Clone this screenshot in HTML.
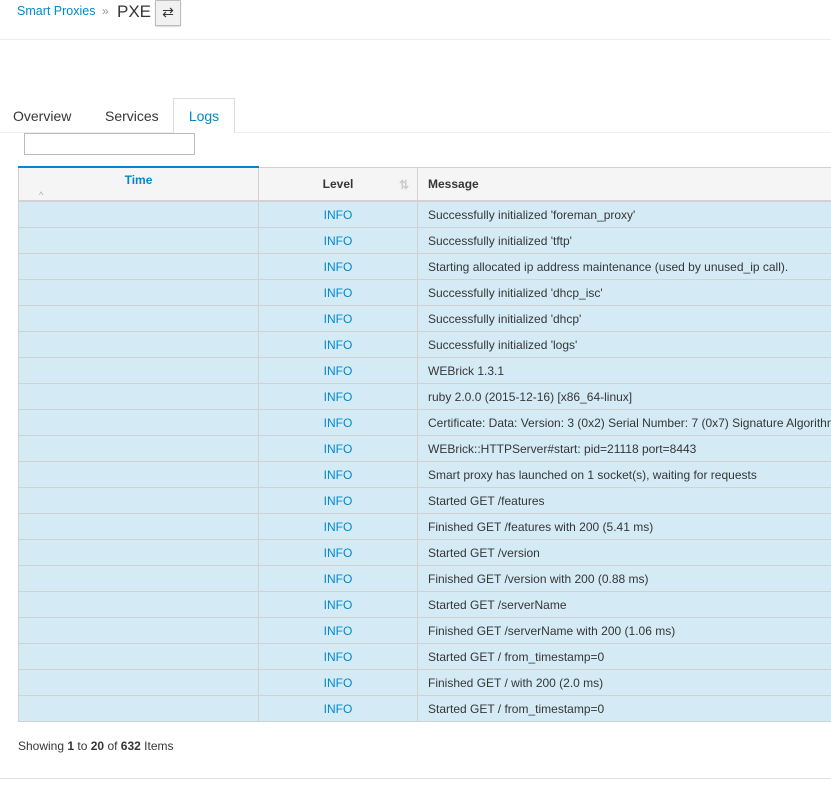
<!DOCTYPE html>
<html><head><style>
body{margin:0;width:831px;height:792px;overflow:hidden;background:#fff;font-family:"Liberation Sans",sans-serif;color:#363636;position:relative;font-size:12px}
.a{position:absolute}
.bc{left:17px;top:4px;font-size:12.5px;color:#0088ce}
.sep{left:102px;top:4px;color:#999;font-size:12px}
.pxe{left:117px;top:2px;font-size:17px;color:#363636}
.btn{left:155px;top:0;width:26px;height:26px;border:1px solid #bbb;background:#f1f1f1;box-sizing:border-box;border-radius:1px;font-size:14px;text-align:center;line-height:23px;box-shadow:0 1px 1px rgba(0,0,0,.15)}
.hr1{left:0;top:39px;width:831px;height:1px;background:#ededed}
.tabline{left:0;top:132px;width:831px;height:1px;background:#ededed}
.tab{top:108px;font-size:14px;color:#363636}
.logs{left:173px;top:98px;width:62px;height:35px;border:1px solid #ddd;border-bottom:none;background:#fff;box-sizing:border-box;color:#0088ce;font-size:14px;text-align:center;padding-top:9px}
.inp{left:24px;top:133px;width:171px;height:22px;border:1px solid #bbb;box-sizing:border-box}
table{position:absolute;left:18px;top:166px;border-collapse:collapse;width:830px;font-size:12px}
th{background:#f5f5f5;border:1px solid #d1d1d1;border-bottom:2px solid #d1d1d1;height:32px;font-weight:bold;padding:0;position:relative;line-height:14px}
td{background:#d4ebf5;border:1px solid #d1d1d1;height:25px;padding:0}
td.l{text-align:center;color:#0088ce}
td.m{padding-left:10px;white-space:nowrap}
.foot{left:18px;top:739px;font-size:12px}
.hr2{left:0;top:778px;width:831px;height:1px;background:#e0e0e0}
</style></head><body>
<div class="a bc">Smart Proxies</div><div class="a sep">»</div><div class="a pxe">PXE</div><div class="a btn">⇄</div>
<div class="a hr1"></div>
<div class="a tab" style="left:13px">Overview</div><div class="a tab" style="left:105px">Services</div>
<div class="a tabline"></div><div class="a logs">Logs</div>
<div class="a inp"></div>
<table>
<tr><th style="width:239px;border-top:2px solid #0088ce;color:#0088ce"><span style="position:absolute;left:0;right:0;top:5px">Time</span><span style="position:absolute;left:20px;top:20px;color:#aaa;font-size:9px;font-weight:normal">^</span></th><th style="width:158px">Level<span style="position:absolute;right:8px;top:10px;color:#ccc">⇅</span></th><th style="text-align:left;padding-left:10px">Message</th></tr>
<tr><td></td><td class="l">INFO</td><td class="m">Successfully initialized 'foreman_proxy'</td></tr>
<tr><td></td><td class="l">INFO</td><td class="m">Successfully initialized 'tftp'</td></tr>
<tr><td></td><td class="l">INFO</td><td class="m">Starting allocated ip address maintenance (used by unused_ip call).</td></tr>
<tr><td></td><td class="l">INFO</td><td class="m">Successfully initialized 'dhcp_isc'</td></tr>
<tr><td></td><td class="l">INFO</td><td class="m">Successfully initialized 'dhcp'</td></tr>
<tr><td></td><td class="l">INFO</td><td class="m">Successfully initialized 'logs'</td></tr>
<tr><td></td><td class="l">INFO</td><td class="m">WEBrick 1.3.1</td></tr>
<tr><td></td><td class="l">INFO</td><td class="m">ruby 2.0.0 (2015-12-16) [x86_64-linux]</td></tr>
<tr><td></td><td class="l">INFO</td><td class="m">Certificate: Data: Version: 3 (0x2) Serial Number: 7 (0x7) Signature Algorithm</td></tr>
<tr><td></td><td class="l">INFO</td><td class="m">WEBrick::HTTPServer#start: pid=21118 port=8443</td></tr>
<tr><td></td><td class="l">INFO</td><td class="m">Smart proxy has launched on 1 socket(s), waiting for requests</td></tr>
<tr><td></td><td class="l">INFO</td><td class="m">Started GET /features</td></tr>
<tr><td></td><td class="l">INFO</td><td class="m">Finished GET /features with 200 (5.41 ms)</td></tr>
<tr><td></td><td class="l">INFO</td><td class="m">Started GET /version</td></tr>
<tr><td></td><td class="l">INFO</td><td class="m">Finished GET /version with 200 (0.88 ms)</td></tr>
<tr><td></td><td class="l">INFO</td><td class="m">Started GET /serverName</td></tr>
<tr><td></td><td class="l">INFO</td><td class="m">Finished GET /serverName with 200 (1.06 ms)</td></tr>
<tr><td></td><td class="l">INFO</td><td class="m">Started GET / from_timestamp=0</td></tr>
<tr><td></td><td class="l">INFO</td><td class="m">Finished GET / with 200 (2.0 ms)</td></tr>
<tr><td></td><td class="l">INFO</td><td class="m">Started GET / from_timestamp=0</td></tr>
</table>
<div class="a foot">Showing <b>1</b> to <b>20</b> of <b>632</b> Items</div>
<div class="a hr2"></div>
</body></html>
